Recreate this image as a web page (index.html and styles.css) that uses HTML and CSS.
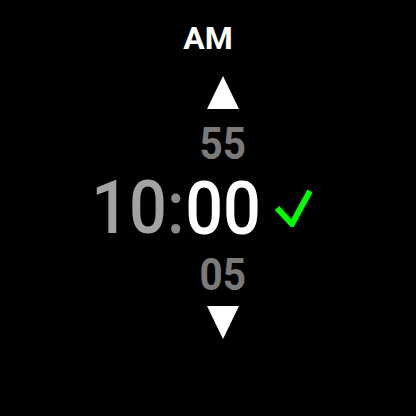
FILE: index.html
```html
<!DOCTYPE html>
<html>
<head>
<meta charset="utf-8">
<link rel="stylesheet" href="styles.css">
</head>
<body>
<div class="screen">
  <div class="ampm">AM</div>
  <div class="picker">
    <div class="hours"><span class="hour">10</span><span class="colon">:</span></div>
    <div class="minutes">
      <svg class="arrow arrow-up" width="32" height="33" viewBox="0 0 32 33"><polygon points="16,0 32,33 0,33" fill="#fff"/></svg>
      <div class="num min-prev">55</div>
      <div class="num min-cur">00</div>
      <div class="num min-next">05</div>
      <svg class="arrow arrow-down" width="32" height="33" viewBox="0 0 32 33"><polygon points="0,0 32,0 16,33" fill="#fff"/></svg>
    </div>
    <div class="confirm">
      <svg width="37" height="38" viewBox="0 0 37 38"><polyline points="2,19 17,35 35,2" fill="none" stroke="#00ff00" stroke-width="6"/></svg>
    </div>
  </div>
</div>
</body>
</html>
```
FILE: styles.css
```css
html, body {
  margin: 0;
  padding: 0;
  background: #000;
}
.screen {
  width: 416px;
  height: 416px;
  background: #000;
  display: flex;
  flex-direction: column;
  align-items: center;
  font-family: Roboto, "Liberation Sans", sans-serif;
  color: #fff;
  padding-top: 22px;
  box-sizing: border-box;
}
.ampm {
  font-size: 32px;
  line-height: 32px;
  font-weight: 700;
  color: #fff;
}
.picker {
  display: flex;
  flex-direction: row;
  align-items: center;
  margin-top: 22px;
  padding-right: 18px;
}
.hours {
  font-size: 74px;
  line-height: 74px;
  font-weight: 500;
  margin-right: -9px;
  transform: scaleX(0.9);
}
.hour { color: #a3a3a3; }
.colon { color: #8a8a8a; }
.minutes {
  display: flex;
  flex-direction: column;
  align-items: center;
}
.arrow { display: block; }
.num { transform: scaleX(0.9); }
.min-prev, .min-next {
  font-size: 45px;
  line-height: 45px;
  font-weight: 700;
  color: #7a7a7a;
}
.min-prev { margin-top: 12px; }
.min-cur {
  font-size: 74px;
  line-height: 74px;
  font-weight: 500;
  color: #fff;
  margin-top: 6px;
}
.min-next { margin-top: 6px; }
.arrow-down { margin-top: 9px; }
.confirm {
  margin-left: 10px;
  display: flex;
}
.confirm svg { display: block; }
```
